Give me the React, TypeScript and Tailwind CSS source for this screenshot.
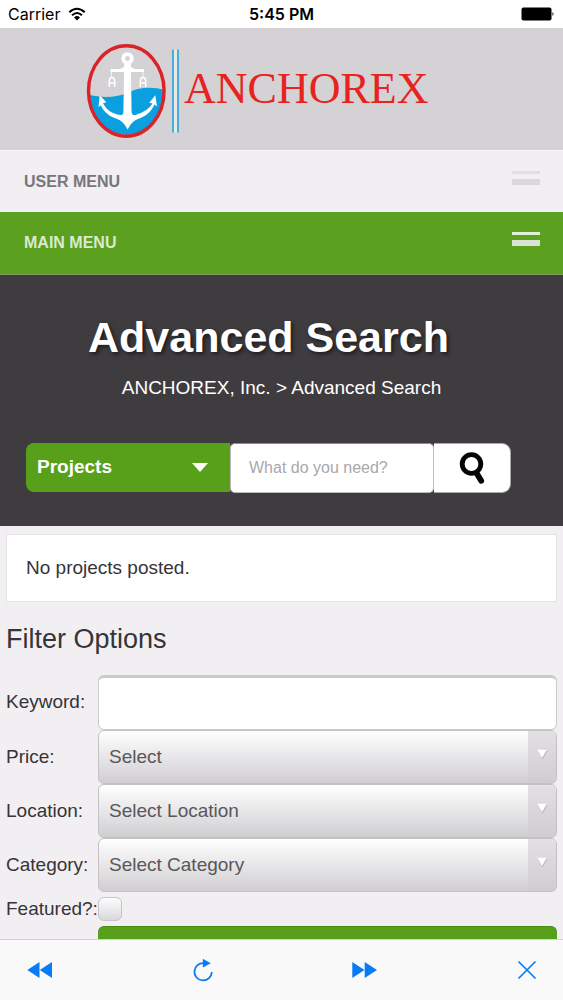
import { ChangeEvent, useState } from "react";

function LogoMark() {
  return (
    <svg width="96" height="98" viewBox="84 43 96 98" className="shrink-0" role="img" aria-label="Anchor emblem">
      <defs>
        <clipPath id="emblem">
          <ellipse cx="126.5" cy="91.5" rx="37" ry="44.5" />
        </clipPath>
      </defs>
      <path
        clipPath="url(#emblem)"
        d="M86 95 C100 99 115 99 127 94 C139 88 154 87 167 92 V140 H86 Z"
        fill="#0a9fdf"
      />
      <ellipse cx="126.3" cy="92" rx="37.8" ry="45.2" fill="none" stroke="#dc2229" strokeWidth="3.4" />
      <g fill="none" stroke="#ffffff">
        <circle cx="127.5" cy="59.5" r="4.3" strokeWidth="3.8" />
        <path d="M110.5 71.5 H144" strokeWidth="2.8" />
        <path d="M111.5 71 V78 M143 71 V78" strokeWidth="0.8" />
        <path d="M109.3 88 V82 Q109.3 78.5 112 78.5 Q114.7 78.5 114.7 82 V88 M109.3 84 H114.7" strokeWidth="1.5" />
        <path d="M140.3 88 V82 Q140.3 78.5 143 78.5 Q145.7 78.5 145.7 82 V88 M140.3 84 H145.7" strokeWidth="1.5" />
      </g>
      <g fill="#ffffff">
        <path d="M124.2 63 H130.8 L131.6 113 Q132 117 136 115.8 Q148 112 152.5 104.5 L149.3 103.8 L155.3 96.2 L157 107.5 L154.5 105.6 C151 113.5 145 117.8 138 120 C133.5 121.7 130.5 125 127.6 130.5 C124.7 125 121.7 121.7 117.2 120 C110.2 117.8 104.2 113.5 100.7 106.2 L98.5 108 L99.7 96.2 L106.3 103.3 L103 104.2 C107 111.8 112 114 119 115.8 Q123.2 117 123.4 113 Z" />
        <path d="M120 70 Q127.5 65 135 70 V73 H120 Z" />
      </g>
      <path d="M175.5 50.5 V133.5" stroke="#e9e8e9" strokeWidth="3.6" />
      <path d="M173 50.5 V133.5 M178 50.5 V133.5" stroke="#2ba3da" strokeWidth="1.6" />
    </svg>
  );
}

function StatusBar() {
  return (
    <div className="grid h-7 shrink-0 grid-cols-3 items-center bg-white px-2 font-['Inter',sans-serif] text-base text-black">
      <div className="flex items-center gap-2">
        <span>Carrier</span>
        <svg width="18" height="14" viewBox="0 0 18 14" aria-label="Wi-Fi" role="img">
          <path d="M1.3 5.2 Q9 -1.7 16.7 5.2 M4 8.2 Q9 3.7 14 8.2" fill="none" stroke="#000" strokeWidth="2" />
          <path d="M6 10.4 Q9 7.6 12 10.4 L9 13.4 Z" />
        </svg>
      </div>
      <span className="text-center font-semibold">5:45 PM</span>
      <svg width="34" height="14" viewBox="0 0 34 14" className="justify-self-end" role="img" aria-label="Battery full">
        <rect x="0.5" y="0.5" width="30" height="13" rx="2" />
        <path d="M31.5 5 Q33.5 7 31.5 9 Z" />
      </svg>
    </div>
  );
}

function MenuBar({ label, green }: { label: string; green?: boolean }) {
  return (
    <button
      type="button"
      className={
        green
          ? "flex h-[63px] w-full items-center justify-between border-b border-[#7d9b62] bg-[#5ba01e] pr-[23px] pl-6 text-base font-bold text-[#d9ead0]"
          : "flex h-[62px] w-full items-center justify-between border-t border-[#f8f8f8] bg-[#f1eff2] pr-[23px] pl-6 text-base font-bold text-[#78767a]"
      }
    >
      <span>{label}</span>
      <span className="flex w-7 flex-col gap-[5px] pb-2">
        <span className={green ? "h-[3px] bg-[#e2efd9]" : "h-[3px] bg-[#e0dee1]"} />
        <span className={green ? "h-[6px] bg-[#d9e3d1]" : "h-[6px] bg-[#dad8db]"} />
      </span>
    </button>
  );
}

function SearchHero() {
  return (
    <section className="bg-[#3f3c40] pt-[38px] pb-[33px]">
      <h1 className="pr-[52px] pl-[26px] text-center text-[43px] leading-[48px] font-bold text-white [text-shadow:2px_2px_4px_rgba(0,0,0,0.6)]">
        Advanced Search
      </h1>
      <nav aria-label="Breadcrumb" className="mt-[15px] text-center text-[19px] leading-6 text-white">
        <a href="#home">ANCHOREX, Inc.</a> &gt; <span>Advanced Search</span>
      </nav>
      <form
        className="mt-[43px] grid grid-cols-[minmax(0,1fr)_minmax(0,1fr)_77px] pr-[52px] pl-[26px]"
        onSubmit={(e) => e.preventDefault()}
      >
        <div className="relative">
          <select
            aria-label="Search in"
            className="h-[49px] w-full appearance-none rounded-l-[8px] bg-[#58a01a] pl-[11px] text-[19px] font-bold text-white"
          >
            <option>Projects</option>
          </select>
          <svg width="16" height="9" viewBox="0 0 16 9" className="pointer-events-none absolute top-5 right-[22px]" aria-hidden="true">
            <path d="M0 0 H16 L8 9 Z" fill="#fff" />
          </svg>
        </div>
        <input
          type="text"
          aria-label="What do you need?"
          placeholder="What do you need?"
          className="h-[50px] w-full rounded-[5px] border border-[#bdbbbe] border-t-[#8d8b8e] bg-white pl-[18px] text-base text-[#333333] placeholder:text-[#aaa8ab]"
        />
        <button
          type="submit"
          aria-label="Search"
          className="flex h-[50px] items-center justify-center rounded-r-[9px] border border-l-0 border-[#aaa8ab] bg-white"
        >
          <svg width="28" height="34" viewBox="0 0 28 34" aria-hidden="true" fill="none" stroke="#050505">
            <circle cx="13.5" cy="13" r="9.3" strokeWidth="4.8" />
            <path d="M18.5 22 L23.2 29.8" strokeWidth="5.8" strokeLinecap="round" />
          </svg>
        </button>
      </form>
    </section>
  );
}

function FilterSelect({ id, label, placeholder }: { id: string; label: string; placeholder: string }) {
  return (
    <>
      <label htmlFor={id}>{label}</label>
      <div className="relative overflow-hidden rounded-[6px] border border-[#c3c1c4] bg-linear-to-b from-[#ffffff] to-[#d0ced1]">
        <select id={id} className="block h-[52px] w-full appearance-none bg-transparent pr-8 pl-[10px] text-[#59575a]">
          <option>{placeholder}</option>
        </select>
        <span
          aria-hidden="true"
          className="pointer-events-none absolute inset-y-0 right-0 flex w-7 justify-center bg-linear-to-b from-[#e2e0e3] to-[#cfcdd0] pt-[18px]"
        >
          <svg width="12" height="11" viewBox="0 0 12 11">
            <path d="M1.5 2 H11.5 L6.5 10.5 Z" fill="#bbb9bc" />
            <path d="M1.2 0.7 H10.8 L6 9 Z" fill="#fff" />
          </svg>
        </span>
      </div>
    </>
  );
}

function Filters() {
  const [keyword, setKeyword] = useState("");
  return (
    <form className="mt-5 grid grid-cols-[92px_minmax(0,1fr)] items-center" onSubmit={(e) => e.preventDefault()}>
      <label htmlFor="keyword">Keyword:</label>
      <input
        id="keyword"
        type="text"
        value={keyword}
        onChange={(e: ChangeEvent<HTMLInputElement>) => setKeyword(e.target.value)}
        className="h-[55px] w-full rounded-[6px] border border-t-[3px] border-[#cbc9cc] bg-white px-[10px]"
      />
      <FilterSelect id="price" label="Price:" placeholder="Select" />
      <FilterSelect id="location" label="Location:" placeholder="Select Location" />
      <FilterSelect id="category" label="Category:" placeholder="Select Category" />
      <label htmlFor="featured" className="whitespace-nowrap">
        Featured?:
      </label>
      <input
        id="featured"
        type="checkbox"
        className="my-[5px] size-6 appearance-none rounded-[6px] border border-[#c6c4c7] bg-linear-to-b from-[#fdfdfd] to-[#dad8db] checked:bg-[#58a01a]"
      />
      <button
        type="submit"
        aria-label="Apply filters"
        className="col-start-2 h-[54px] rounded-[6px] border-t border-[#488a14] bg-[#58a01a]"
      />
    </form>
  );
}

function Toolbar() {
  return (
    <footer className="flex h-[61px] shrink-0 items-center justify-between border-t border-[#d2d0d3] bg-[#f9f9fa] px-[26px] text-[#087cf5]">
      <button type="button" aria-label="Back">
        <svg width="28" height="18" viewBox="0 0 28 18" fill="currentColor">
          <path d="M13.5 1 V17 L1.3 9 Z M26 1 V17 L13.8 9 Z" />
        </svg>
      </button>
      <button type="button" aria-label="Reload">
        <svg width="22" height="26" viewBox="0 0 22 26" fill="none">
          <path d="M12 6.1 A8.7 8.7 0 1 0 19.8 15" stroke="currentColor" strokeWidth="1.8" />
          <path d="M10.8 1.7 L18.8 6.3 L10.8 10.5 Z" fill="currentColor" />
        </svg>
      </button>
      <button type="button" aria-label="Forward">
        <svg width="28" height="18" viewBox="0 0 28 18" fill="currentColor">
          <path d="M1.3 1 V17 L13.5 9 Z M13.7 1 V17 L26 9 Z" />
        </svg>
      </button>
      <button type="button" aria-label="Close">
        <svg width="20" height="20" viewBox="0 0 20 20" fill="none" stroke="currentColor" strokeWidth="1.7">
          <path d="M1.5 1.5 L18.5 18.5 M18.5 1.5 L1.5 18.5" />
        </svg>
      </button>
    </footer>
  );
}

export default function App() {
  return (
    <div className="flex h-dvh flex-col bg-[#f1eff2] font-['Liberation_Sans',sans-serif] text-[19px] text-[#363438]">
      <StatusBar />
      <div className="min-h-0 flex-1 overflow-y-auto [scrollbar-width:none]">
        <header>
          <a href="#home" className="flex h-[122px] items-center bg-[#d4d2d4] pt-1 pl-[84px]">
            <LogoMark />
            <span className="pb-1 pl-1 font-['Liberation_Serif',serif] text-[44px] leading-none text-[#e8221f]">ANCHOREX</span>
          </a>
          <MenuBar label="USER MENU" />
          <MenuBar label="MAIN MENU" green />
        </header>
        <SearchHero />
        <main className="px-[6px] pt-2">
          <p className="border border-[#e4e2e5] bg-white px-[19px] py-5 leading-[26px]">No projects posted.</p>
          <h2 className="mt-[21px] text-[27px] leading-8">Filter Options</h2>
          <Filters />
        </main>
      </div>
      <Toolbar />
    </div>
  );
}
